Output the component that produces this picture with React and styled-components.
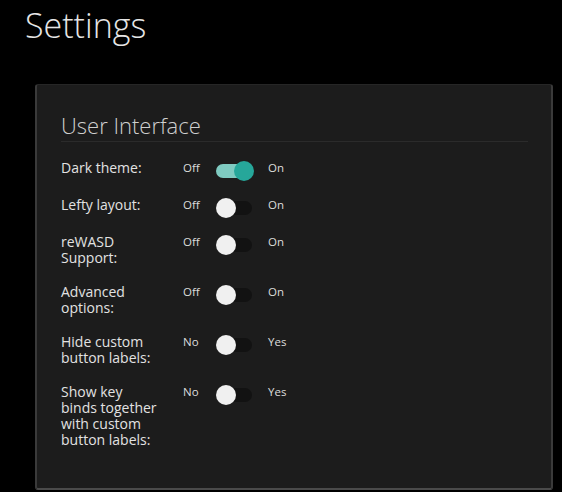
import styled, { createGlobalStyle } from "styled-components";

const GlobalStyle = createGlobalStyle`
  html, body {
    margin: 0;
    padding: 0;
    background: #000;
  }
  body {
    font-family: "Open Sans", "Noto Sans", sans-serif;
    color: #e4e4e4;
  }
`;

const Page = styled.div`
  width: 562px;
  height: 492px;
  overflow: hidden;
  background: #000;
`;

const PageTitle = styled.h1`
  margin: 0;
  padding: 2px 0 0 25px;
  height: 80px;
  box-sizing: border-box;
  font-size: 34px;
  font-weight: 300;
  line-height: 46px;
  color: #e6e6e6;
`;

const Card = styled.div`
  margin: 4px 9px 0 35px;
  height: 406px;
  box-sizing: border-box;
  background: #1c1c1c;
  border: 1px solid #262626;
  border-left: 2px solid #3a3a3a;
  border-right: 2px solid #3a3a3a;
  border-bottom: 2px solid #4a4a4a;
  border-radius: 3px;
  padding: 26px 23px 0 24px;
`;

const SectionTitle = styled.h2`
  margin: 0;
  padding-bottom: 2px;
  font-size: 22px;
  font-weight: 300;
  line-height: 28px;
  color: #cfcfcf;
  border-bottom: 1px solid #2b2b2b;
`;

const List = styled.div`
  display: flex;
  flex-direction: column;
  gap: 18px;
  padding-top: 18px;
`;

const Row = styled.div`
  display: flex;
  align-items: flex-start;
`;

const Label = styled.div`
  width: 99px;
  margin-right: 23px;
  font-size: 14px;
  line-height: 16px;
  color: #e2e2e2;
`;

const StateText = styled.span`
  width: ${(p) => p.$w}px;
  font-size: 11.5px;
  line-height: 16px;
  color: #dcdcdc;
`;

const Switch = styled.span`
  position: relative;
  width: 36px;
  height: 19px;
  margin-right: 16px;
  flex-shrink: 0;
  &::before {
    content: "";
    position: absolute;
    left: 0;
    top: 4px;
    width: 36px;
    height: 14px;
    border-radius: 7px;
    background: ${(p) => (p.$on ? "#7fcbc1" : "#121212")};
  }
  &::after {
    content: "";
    position: absolute;
    top: 1px;
    left: ${(p) => (p.$on ? "18px" : "0")};
    width: 20px;
    height: 20px;
    border-radius: 50%;
    background: ${(p) => (p.$on ? "#26a79a" : "#f0f0f0")};
  }
`;

const options = [
  { label: "Dark theme:", off: "Off", on: "On", value: true },
  { label: "Lefty layout:", off: "Off", on: "On", value: false },
  { label: "reWASD Support:", off: "Off", on: "On", value: false },
  { label: "Advanced options:", off: "Off", on: "On", value: false },
  { label: "Hide custom button labels:", off: "No", on: "Yes", value: false },
  {
    label: "Show key binds together with custom button labels:",
    off: "No",
    on: "Yes",
    value: false,
  },
];

export default function App() {
  return (
    <Page>
      <GlobalStyle />
      <PageTitle>Settings</PageTitle>
      <Card>
        <SectionTitle>User Interface</SectionTitle>
        <List>
          {options.map((o) => (
            <Row key={o.label}>
              <Label>{o.label}</Label>
              <StateText $w={33}>{o.off}</StateText>
              <Switch $on={o.value} />
              <StateText $w={30}>{o.on}</StateText>
            </Row>
          ))}
        </List>
      </Card>
    </Page>
  );
}
